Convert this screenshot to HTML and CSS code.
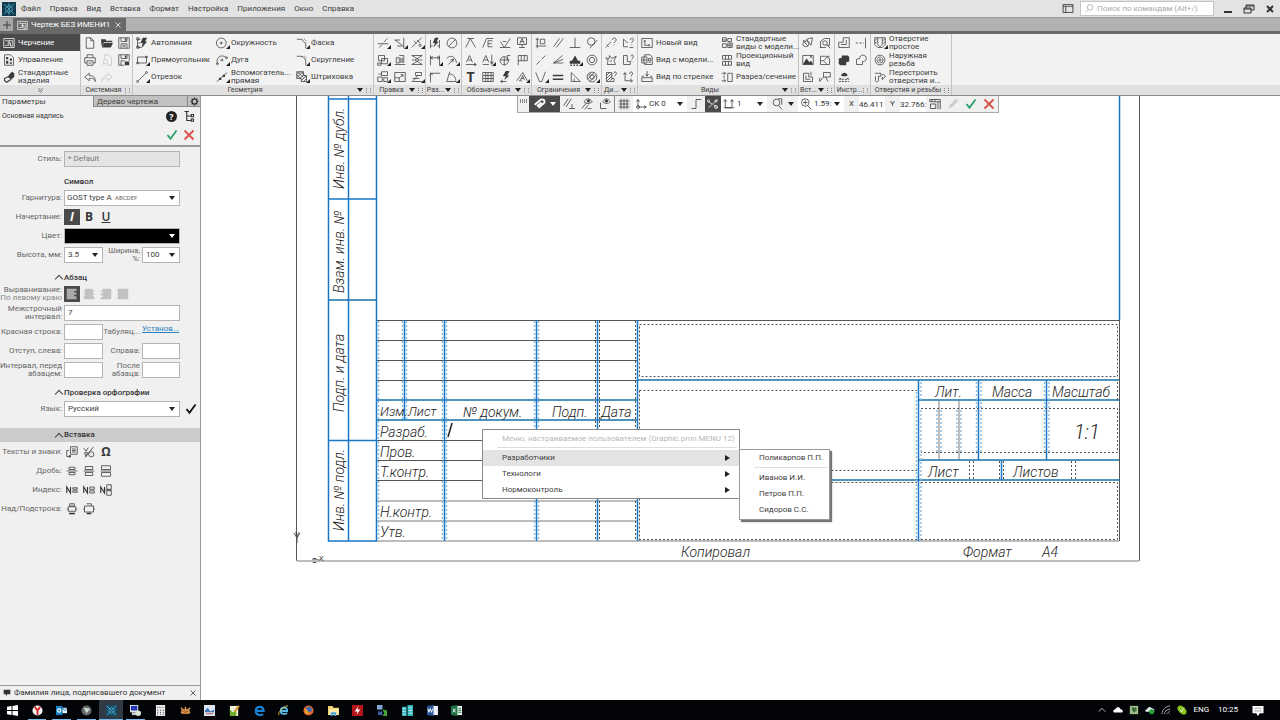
FILE: index.html
```html
<!DOCTYPE html>
<html lang="ru">
<head>
<meta charset="utf-8">
<title>Чертеж БЕЗ ИМЕНИ1</title>
<link rel="stylesheet" href="styles.css">
</head>
<body>
<svg class="sprite" aria-hidden="true">
  <symbol id="draft" viewBox="0 0 16 16"><path d="M1 2h14v12H1zM3 5h5v6H3M8 5h5v7h-3V8H6"/></symbol>
  <symbol id="manage" viewBox="0 0 16 16"><path d="M2 1h8l4 4v10H2z"/><path class="f" d="M4 4h3v3H4zM9 6h3v3H9zM4 9h3v4H4zM9 11h3v2H9z"/></symbol>
  <symbol id="bolt3d" viewBox="0 0 16 16"><path class="f" d="M8 5l4-4 3 2v5l-4 3-4-2z"/><path stroke-width="1.500" d="M8 7l-6 3v3l3 2 6-4"/></symbol>
  <symbol id="new" viewBox="0 0 16 16"><path d="M3 1h6l4 4v10H3zM9 1v4h4"/></symbol>
  <symbol id="open" viewBox="0 0 16 16"><path class="f" d="M0 3h6l1 2h8v2H4l-3 6zM4 8h12l-3 6H1z"/></symbol>
  <symbol id="save" viewBox="0 0 16 16"><path d="M1 1h14v14H1zM4 1v5h8V1M4 15V9h8v6M6 11h4M6 13h4"/><path class="f" d="M9 2h2v3H9z"/></symbol>
  <symbol id="savecfg" viewBox="0 0 16 16"><path d="M1 1h14v8M1 1v14h7M4 1v5h8V1M4 15V9h5"/><path class="f" d="M9 2h2v3H9zM9 10h6v5H9z"/></symbol>
  <symbol id="print" viewBox="0 0 16 16"><path d="M4 5V1h8v4M4 12H1V5h14v7h-3M4 9h8v6H4zM6 12h4"/></symbol>
  <symbol id="preview" viewBox="0 0 16 16"><path d="M5 1h5l4 4v10H7M5 1v6"/><circle cx="6" cy="10" r="3"/><path d="M4 12l-3 3"/></symbol>
  <symbol id="undo" viewBox="0 0 16 16"><path d="M7 3L1 8l6 5v-3c4-1 7 0 8 4 0-6-3-8-8-8z"/></symbol>
  <symbol id="redo" viewBox="0 0 16 16"><path d="M9 3l6 5-6 5v-3c-4-1-7 0-8 4 0-6 3-8 8-8z"/></symbol>
  <symbol id="autoline" viewBox="0 0 16 16"><path d="M2 3h4M2 3v11h5M3 8h3M1 1h3v3H1zM1 12h3v3H1z"/><path class="f" d="M9 1h6l-3 5h3l-8 9 2-7H6z"/></symbol>
  <symbol id="circle" viewBox="0 0 16 16"><circle cx="7" cy="8" r="6.500"/><path d="M5 8h4M7 6v4"/></symbol>
  <symbol id="rect" viewBox="0 0 16 16"><path d="M2 4h12v8H2zM1 11h2v2H1zM13 3h2v2h-2z"/></symbol>
  <symbol id="arc" viewBox="0 0 16 16"><path d="M2 13C-1 5 7-1 14 5M6 8h4M8 6v4"/><circle cx="2" cy="13" r="1.300"/><circle cx="14" cy="5" r="1.300"/></symbol>
  <symbol id="segment" viewBox="0 0 16 16"><path d="M3 13L13 3"/><circle cx="2" cy="14" r="1.300"/><circle cx="14" cy="2" r="1.300"/></symbol>
  <symbol id="aux" viewBox="0 0 16 16"><path d="M1 14L15 2"/><path class="f" d="M4 9h3v3H4zM9 5h3v3H9z"/></symbol>
  <symbol id="chamfer" viewBox="0 0 16 16"><path d="M1 3h6l6 6v6"/><path d="M8 3h5v5" stroke-dasharray="1 2"/></symbol>
  <symbol id="fillet" viewBox="0 0 16 16"><path d="M1 3h4c5 0 8 3 8 8v4"/><path d="M8 3h5v5" stroke-dasharray="1 2"/></symbol>
  <symbol id="hatch" viewBox="0 0 16 16"><path d="M1 1h9v5h4v8H7v-4H1zM1 5l4-4M1 9l8-8M5 10l5-5M7 13l6-6M10 14l4-4M2 1l8 8M1 5l6 6M7 1l7 8"/></symbol>
  <symbol id="trim" viewBox="0 0 16 16"><path d="M1 9h14M3 14l4-4M9 7l5-5"/></symbol>
  <symbol id="extend" viewBox="0 0 16 16"><path d="M1 4h7M1 4l10 7M4 12h9M13 1v14"/></symbol>
  <symbol id="split" viewBox="0 0 16 16"><path d="M1 14L14 1M4 5l3 4M8 4l4 4"/><circle cx="12" cy="11" r="1.500"/></symbol>
  <symbol id="move" viewBox="0 0 16 16"><path d="M2 2h8v7H2zM6 6h8v7H6zM1 12h4v3H1z"/></symbol>
  <symbol id="mirror" viewBox="0 0 16 16"><path d="M3 5h4v7H3zM7 2h6v10M1 14h14M9 5v7M11 5v7"/></symbol>
  <symbol id="hourglass" viewBox="0 0 16 16"><path d="M1 2h14L5 8l10 6H1l10-6zM1 8h3M12 8h3"/></symbol>
  <symbol id="copy" viewBox="0 0 16 16"><path d="M6 1h8v5H6zM1 8h6v6H1zM9 9h5v5H9zM2 4h4"/></symbol>
  <symbol id="scale" viewBox="0 0 16 16"><path d="M1 2h14v12H1zM1 9h6v5M7 9l5-4M9 5h3v3"/></symbol>
  <symbol id="rotate" viewBox="0 0 16 16"><path d="M1 14h14M2 10h9M6 2h8v4H6zM3 13l6-7"/></symbol>
  <symbol id="dimauto" viewBox="0 0 16 16"><path d="M2 4v11M14 4v11M2 12h3M11 12h3"/><path class="f" d="M8 1h5l-3 5h3l-7 8 2-6H5z"/></symbol>
  <symbol id="diam" viewBox="0 0 16 16"><circle cx="8" cy="8" r="6.500"/><path d="M3 13L13 3"/></symbol>
  <symbol id="dimlin" viewBox="0 0 16 16"><path d="M2 2v13M14 2v13M2 5h12M2 5l3-2M2 5l3 2M14 5l-3-2M14 5l-3 2"/></symbol>
  <symbol id="radius" viewBox="0 0 16 16"><path d="M1 6c5-6 12-2 13 6M3 14l7-7M10 7l-4 1M10 7l-1 4"/></symbol>
  <symbol id="dimh" viewBox="0 0 16 16"><path d="M2 15V3h13M2 3l3 2M1 6l2-3"/></symbol>
  <symbol id="angle" viewBox="0 0 16 16"><path d="M5 1L1 14h13M4 4c6 0 9 4 9 9"/></symbol>
  <symbol id="rough" viewBox="0 0 16 16"><path d="M1 14L7 2l7 12M3 2h9"/></symbol>
  <symbol id="base" viewBox="0 0 16 16"><path d="M1 14L6 2h9M8 5h6M8 5v8h6M8 9h5"/></symbol>
  <symbol id="rcheck" viewBox="0 0 16 16"><path d="M2 6l5 8 8-12M1 14h14M5 6h5"/></symbol>
  <symbol id="datum" viewBox="0 0 16 16"><path d="M2 1h12v9H2zM5 9l3-7 3 7M6 6h4M8 10v4M4 14h8"/></symbol>
  <symbol id="aline" viewBox="0 0 16 16"><path d="M2 11L6 2l4 9M4 8h5M1 14h14M12 12l3 2-3 2"/></symbol>
  <symbol id="adown" viewBox="0 0 16 16"><path d="M1 11L5 2l4 9M3 8h5M13 1v12M11 10l2 4 2-4M1 14h8"/></symbol>
  <symbol id="pos" viewBox="0 0 16 16"><circle cx="7" cy="9" r="5.500"/><path d="M7 4v11M2 8h12M11 8V2h4"/></symbol>
  <symbol id="flag" viewBox="0 0 16 16"><path d="M3 15V2h12v7H3M7 2v7M11 2v7"/></symbol>
  <symbol id="tbl" viewBox="0 0 16 16"><path d="M1 2h14v12H1zM1 6h14M1 10h14M5 2v12M8 2v12M12 2v12"/></symbol>
  <symbol id="zap" viewBox="0 0 16 16"><path class="f" d="M9 0h5l-3 6h3l-7 6 2-5H5z"/><path d="M2 14h8M2 14l3-2M2 14l3 2"/></symbol>
  <symbol id="atri" viewBox="0 0 16 16"><path d="M1 13L9 2l6 11M4 13h4M6 12l3-6 2 6M7 10h3"/></symbol>
  <symbol id="calign" viewBox="0 0 16 16"><path d="M3 1v14M1 12h14M7 3h6v6H7zM1 3h4"/></symbol>
  <symbol id="par" viewBox="0 0 16 16"><path d="M2 13L10 2M6 14l9-12"/></symbol>
  <symbol id="perp" viewBox="0 0 16 16"><path d="M1 14h14M8 1v13"/></symbol>
  <symbol id="tan" viewBox="0 0 16 16"><circle cx="7" cy="6" r="5"/><path d="M5 15L15 4"/></symbol>
  <symbol id="slash" viewBox="0 0 16 16"><path d="M2 14L7 9M9 7l5-5"/></symbol>
  <symbol id="angl" viewBox="0 0 16 16"><path d="M14 2L2 12h13M2 12l13-5"/></symbol>
  <symbol id="fix" viewBox="0 0 16 16"><path class="f" d="M8 2l4 7h3v4H1V9h3zM2 14h2v2H2zM6 14h2v2H6zM10 14h2v2h-2z"/></symbol>
  <symbol id="conc" viewBox="0 0 16 16"><circle cx="8" cy="8" r="6.500"/><circle cx="8" cy="8" r="3.500"/></symbol>
  <symbol id="sym" viewBox="0 0 16 16"><path d="M1 2l5 12M6 14h3M14 1L9 14"/></symbol>
  <symbol id="eq" viewBox="0 0 16 16"><path class="f" d="M1 5h14v2H1zM1 10h14v2H1z"/></symbol>
  <symbol id="tri" viewBox="0 0 16 16"><path d="M3 2v12h12zM7 10v4"/></symbol>
  <symbol id="hcirc" viewBox="0 0 16 16"><circle cx="8" cy="8" r="6.500"/><circle cx="8" cy="8" r="3"/><path d="M2 11l9-9M5 14l9-9M3 6l3-3"/></symbol>
  <symbol id="q1" viewBox="0 0 16 16"><path d="M1 14L8 6M2 10l3 3M10 4c0-4 5-3 5 0 0 2-3 2-3 4M12 10v1"/></symbol>
  <symbol id="q2" viewBox="0 0 16 16"><path d="M2 3v10h6M2 3l6 5M11 4c0-3 5-3 4 0 0 2-2 2-2 4M13 10v1M10 14h5"/></symbol>
  <symbol id="q3" viewBox="0 0 16 16"><path d="M1 5l4 2 1-5 3 4 6-3-3 6 2 5H3l1-5zM8 8v3M8 13v1"/></symbol>
  <symbol id="q4" viewBox="0 0 16 16"><path d="M7 2H2v12h9v-4H7zM12 3c0-3 4-2 3 1l-2 3M13 9v1"/></symbol>
  <symbol id="q5" viewBox="0 0 16 16"><path d="M2 2h7v8h3v4H2zM2 6l4-4M2 10l7-7M3 13l7-7M7 13l3-3M12 3c0-3 4-2 3 1l-2 3"/></symbol>
  <symbol id="q6" viewBox="0 0 16 16"><path d="M4 3v10h9M2 5l2-3 2 3M11 11l3 2-3 2M10 4c0-4 5-3 4 0l-2 3M12 9v1"/></symbol>
  <symbol id="vnew" viewBox="0 0 16 16"><path d="M1 2h14v12H1zM5 5v6h6M4 6l1-2 1 2M10 10l2 1-2 1"/></symbol>
  <symbol id="vmodel" viewBox="0 0 16 16"><path d="M5 4V1h7l3 3v10H5v-2M1 4h7v8H1zM10 6h3v3h-3zM10 11h3M1 8h7M4 4v8"/></symbol>
  <symbol id="varrow" viewBox="0 0 16 16"><path d="M8 0v6M6 4l2 3 2-3M1 9h14v5H1zM1 7h3M12 7h3"/></symbol>
  <symbol id="vstd" viewBox="0 0 16 16"><path d="M2 1h5v5H2zM9 2h5v4H9zM2 9h5v5H2zM9 8h6v6H9zM9 11h6M12 8v6M2 4h5"/></symbol>
  <symbol id="vproj" viewBox="0 0 16 16"><path d="M2 2h12v5H2zM2 10h12v5H2zM6 2v5M10 2v5M6 10v5M10 10v5"/></symbol>
  <symbol id="vsect" viewBox="0 0 16 16"><path d="M1 3h5M4 1l2 2-2 2M4 6v4M1 13h5M4 11l2 2-2 2M9 3h6v11H9z"/></symbol>
  <symbol id="i1" viewBox="0 0 16 16"><circle cx="5" cy="9" r="4"/><path d="M6 3l8-2-2 10zM3 7l5 5M1 4l4 3"/></symbol>
  <symbol id="i2" viewBox="0 0 16 16"><path d="M2 14V6l5-4h7v9h-4M1 14h8M11 11l4 4"/><circle cx="8" cy="8" r="3"/></symbol>
  <symbol id="pic" viewBox="0 0 16 16"><path d="M1 2h14v12H1z"/><path class="f" d="M1 14l5-8 4 5 2-2 3 5zM11 3h2v2h-2z"/></symbol>
  <symbol id="i4" viewBox="0 0 16 16"><path d="M2 3h7l5 3v8H2zM2 9h4l5 5M6 9l6-6M11 3h3"/></symbol>
  <symbol id="i5" viewBox="0 0 16 16"><path d="M2 3h7v5h5v6H2zM5 11h6M5 6v5M12 1v5"/></symbol>
  <symbol id="i6" viewBox="0 0 16 16"><path d="M6 2h9v6H6zM6 8l-5 6M9 8l3 6M1 14V9"/></symbol>
  <symbol id="t1" viewBox="0 0 16 16"><path d="M1 7h6V1h8v13H1zM4 10h7V4"/></symbol>
  <symbol id="t2" viewBox="0 0 16 16"><path d="M1 8h3M6 8h3M11 8h1M14 1v14"/></symbol>
  <symbol id="t3" viewBox="0 0 16 16"><path class="f" d="M1 6l4-1V2h8l2 2v6l-4 1v4H3l-2-2z"/></symbol>
  <symbol id="t4" viewBox="0 0 16 16"><path d="M2 14V7l4-1c0-6 9-6 9 0 0 4-4 4-5 4v4z"/></symbol>
  <symbol id="t5" viewBox="0 0 16 16"><path class="f" d="M4 6c2-5 7-5 9 0l-2 1H6z"/><path d="M1 14h14M2 9l4 3M14 9l-4 3M1 11h14" stroke-dasharray="3 1"/></symbol>
  <symbol id="hole" viewBox="0 0 16 16"><path d="M1 1h14v9l-4 4H5l-4-4zM5 1v9l3 3 3-3V1M1 5l3-3M1 9l3-3M12 5l3-3M12 9l3-3"/></symbol>
  <symbol id="thread" viewBox="0 0 16 16"><circle cx="8" cy="8" r="6.500"/><circle cx="8" cy="8" r="4" stroke-dasharray="6 1"/><circle cx="8" cy="8" r="1.500"/></symbol>
  <symbol id="rebuild" viewBox="0 0 16 16"><path d="M1 3h8v4H6v6l-2 2-2-2V7M10 5c6-2 6 5 1 5M12 8l-2 2 2 2"/></symbol>
  <symbol id="gear" viewBox="0 0 16 16"><circle cx="8" cy="8" r="4.500" stroke-width="2"/><path stroke-width="2" d="M8 1v2M8 13v2M1 8h2M13 8h2M3 3l1.500 1.500M11.500 11.500L13 13M3 13l1.500-1.500M11.500 4.500L13 3"/></symbol>
  <symbol id="tree" viewBox="0 0 16 16"><path stroke-width="1.500" d="M2 2h6M5 2v12h6M5 8h6M11 6h3v3h-3zM11 12h3v3h-3z"/></symbol>
  <symbol id="tick" viewBox="0 0 16 16"><path stroke-width="2.500" d="M2 8l4 5 8-11"/></symbol>
  <symbol id="cross" viewBox="0 0 16 16"><path stroke-width="2.500" d="M2 2l12 12M14 2L2 14"/></symbol>
  <symbol id="al1" viewBox="0 0 16 16"><path class="f" d="M1 1h13v3h-3v2h3v3h-3v2h3v4H1z"/></symbol>
  <symbol id="al2" viewBox="0 0 16 16"><path class="f" d="M3 1h10v2h2v2h-2v2h2v2h-2v2h2v4H1v-4h2V9H1V7h2V5H1V3h2z"/></symbol>
  <symbol id="al3" viewBox="0 0 16 16"><path class="f" d="M4 1h11v14H1v-3h3v-2H1V7h3V5H1V3h3z"/></symbol>
  <symbol id="al4" viewBox="0 0 16 16"><path class="f" d="M1 1h14v14H1z"/></symbol>
  <symbol id="ins" viewBox="0 0 16 16"><path d="M6 1h9v10H6zM8 4h5M8 6h5M8 8h5M4 6H1v8h5v-2M4 12l2 2-2 2"/></symbol>
  <symbol id="frac" viewBox="0 0 16 16"><path d="M1 3l3 4 3-5M3 15L14 1M2 9h4M2 9l2 5 2-5"/><circle cx="11" cy="11" r="3.500"/></symbol>
  <symbol id="d1" viewBox="0 0 16 16"><path d="M1 8h14M4 3h8v3H4zM4 10h8v3H4z"/></symbol>
  <symbol id="d2" viewBox="0 0 16 16"><path d="M1 8h14M3 2h10v4H3zM3 10h10v4H3z"/></symbol>
  <symbol id="d3" viewBox="0 0 16 16"><path d="M1 8h14M2 1h12v5H2zM2 10h12v5H2z"/></symbol>
  <symbol id="n1" viewBox="0 0 16 16"><path stroke-width="1.500" d="M1 12V4l5 8V4"/><path d="M9 5h6v2H9zM9 9h6v2H9z"/></symbol>
  <symbol id="n2" viewBox="0 0 16 16"><path stroke-width="1.500" d="M1 12V4l5 8V4"/><path d="M9 4h6v3H9zM9 9h6v3H9z"/></symbol>
  <symbol id="n3" viewBox="0 0 16 16"><path stroke-width="1.500" d="M1 12V4l5 8V4"/><path d="M9 1h6v6H9zM9 9h6v6H9zM7 8h9"/></symbol>
  <symbol id="o1" viewBox="0 0 16 16"><path d="M3 5h10v6H3zM1 8h2M13 8h2M5 1h6v3H5z"/><path class="f" d="M4 13h8v2H4z"/></symbol>
  <symbol id="o2" viewBox="0 0 16 16"><path d="M2 4h12v8H2zM0 8h2M14 8h2M5 1h6v3"/><path class="f" d="M5 13h6v2H5z"/></symbol>
  <symbol id="clip" viewBox="0 0 16 16"><path stroke-width="2.500" d="M1 9l7-6c4-3 8 1 5 4l-7 6M4 11l6-5"/></symbol>
  <symbol id="snap1" viewBox="0 0 16 16"><path d="M1 10L7 1M4 12L11 1M8 14h8M12 8v6"/></symbol>
  <symbol id="snap2" viewBox="0 0 16 16"><path d="M4 5c3-5 8-5 11 0-3 3-8 3-11 0M1 14l6-7M5 15l5-6M9 14h5"/><circle class="f" cx="10" cy="4" r="2"/></symbol>
  <symbol id="snap3" viewBox="0 0 16 16"><path d="M5 5c3-5 7-5 10 0-3 3-7 3-10 0M2 6v8h8"/><circle class="f" cx="10" cy="4" r="2"/></symbol>
  <symbol id="grid" viewBox="0 0 16 16"><path d="M4 1v14M8 1v14M12 1v14M1 4h14M1 8h14M1 12h14"/></symbol>
  <symbol id="axes" viewBox="0 0 16 16"><path d="M4 2v10h11M2 5l2-3 2 3M12 10l3 2-3 2"/><circle cx="4" cy="12" r="2"/></symbol>
  <symbol id="step" viewBox="0 0 16 16"><path d="M2 14h6V2h7"/></symbol>
  <symbol id="cut" viewBox="0 0 16 16"><path d="M2 5l5 3M14 2L2 13M9 9l5 4"/><circle cx="2" cy="4" r="1.500"/><circle cx="12" cy="12" r="2"/><circle cx="12" cy="4" r="1.500"/></symbol>
  <symbol id="stepxy" viewBox="0 0 16 16"><path d="M3 3v10h9V3M1 5l2-3 2 3M10 5l2-3 2 3M1 13h14"/></symbol>
  <symbol id="zoomfit" viewBox="0 0 16 16"><circle cx="6" cy="6" r="4.500"/><path d="M9 10l4 5M8 1h5v8"/></symbol>
  <symbol id="zoomin" viewBox="0 0 16 16"><circle cx="7" cy="6" r="5"/><path d="M4 6h6M7 3v6M10 10l5 5"/></symbol>
  <symbol id="ruler" viewBox="0 0 16 16"><path d="M1 2h14v3H1zM12 5v10M15 5v10M2 8h7v6H2zM4 2v3M8 2v3"/></symbol>
  <symbol id="pencil" viewBox="0 0 16 16"><path class="f" d="M2 14l2-5 8-8 3 3-8 8z"/></symbol>
  <symbol id="magn" viewBox="0 0 16 16"><circle cx="9" cy="6" r="5"/><path d="M5 10l-4 5"/></symbol>
  <symbol id="close" viewBox="0 0 16 16"><path stroke-width="1.500" d="M3 3l10 10M13 3L3 13"/></symbol>
  <symbol id="chev" viewBox="0 0 16 16"><path stroke-width="1.500" d="M3 3l5 4 5-4M3 8l5 4 5-4"/></symbol>
</svg>

<header class="menubar">
  <svg class="logo" viewBox="0 0 16 16" aria-hidden="true"><path fill="#12394d" d="M0 0h16v16H0z"/><g fill="none" stroke="#4ea6c4"><circle cx="8" cy="8" r="4"/><path d="M2 2l12 12M14 2L2 14M8 1v14"/></g></svg>
  <nav class="menus" aria-label="Главное меню">
    <button>Файл</button><button>Правка</button><button>Вид</button><button>Вставка</button><button>Формат</button><button>Настройка</button><button>Приложения</button><button>Окно</button><button>Справка</button>
  </nav>
  <button class="layout" aria-label="Экран"><svg viewBox="0 0 12 10"><path d="M.5.500h11v9H.5zM.5 2.500h11M3.500 2.500v7"/></svg></button>
  <label class="search"><svg><use href="#magn"/></svg><input type="search" placeholder="Поиск по командам (Alt+/)" aria-label="Поиск по командам"></label>
  <div class="winbtns">
    <button aria-label="Свернуть"><svg viewBox="0 0 12 12"><path stroke-width="2" d="M2 9h8"/></svg></button>
    <button aria-label="Восстановить"><svg viewBox="0 0 12 12"><path d="M1 5h7v5H1zM3 5V2h8v5H8M3 3h8M1 6h7"/></svg></button>
    <button aria-label="Закрыть"><svg viewBox="0 0 12 12"><path stroke-width="2" d="M3 3l6 6M9 3L3 9"/></svg></button>
  </div>
</header>

<div class="tabbar">
  <button class="addtab" aria-label="Новая вкладка"><svg viewBox="0 0 12 12"><path d="M6 2v8M2 6h8"/></svg></button>
  <div class="doctab"><svg><use href="#draft"/></svg><span>Чертеж БЕЗ ИМЕНИ1</span><button aria-label="Закрыть вкладку"><svg><use href="#close"/></svg></button></div>
</div>

<section class="ribbon" aria-label="Лента">
  <div class="group sets">
    <div class="cells">
      <button class="cmd on"><svg><use href="#draft"/></svg><span>Черчение</span></button>
      <button class="cmd"><svg><use href="#manage"/></svg><span>Управление</span></button>
      <button class="cmd"><svg><use href="#bolt3d"/></svg><span>Стандартные<br>изделия</span></button>
    </div>
    <div class="foot"><svg><use href="#chev"/></svg></div>
  </div>
  <div class="group">
    <div class="cells c3">
      <button aria-label="Создать"><svg><use href="#new"/></svg></button><button aria-label="Открыть"><svg><use href="#open"/></svg></button><button aria-label="Сохранить"><svg><use href="#save"/></svg></button>
      <button aria-label="Печать"><svg><use href="#print"/></svg></button><button disabled aria-label="Просмотр"><svg><use href="#preview"/></svg></button><button aria-label="Сохранить как"><svg><use href="#savecfg"/></svg></button>
      <button aria-label="Отменить"><svg><use href="#undo"/></svg></button><button disabled aria-label="Повторить"><svg><use href="#redo"/></svg></button>
    </div>
    <div class="foot grip"><span>Системная</span></div>
  </div>
  <div class="group">
    <div class="cells w3">
      <button class="cmd"><svg><use href="#autoline"/></svg><span>Автолиния</span></button><button class="cmd more"><svg><use href="#circle"/></svg><span>Окружность</span></button><button class="cmd more"><svg><use href="#chamfer"/></svg><span>Фаска</span></button>
      <button class="cmd more"><svg><use href="#rect"/></svg><span>Прямоугольник</span></button><button class="cmd more"><svg><use href="#arc"/></svg><span>Дуга</span></button><button class="cmd more"><svg><use href="#fillet"/></svg><span>Скругление</span></button>
      <button class="cmd more"><svg><use href="#segment"/></svg><span>Отрезок</span></button><button class="cmd more"><svg><use href="#aux"/></svg><span>Вспомогатель...<br>прямая</span></button><button class="cmd more"><svg><use href="#hatch"/></svg><span>Штриховка</span></button>
    </div>
    <div class="foot grip drop"><span>Геометрия</span></div>
  </div>
  <div class="group">
    <div class="cells c3">
      <button class="more" aria-label="Усечь"><svg><use href="#trim"/></svg></button><button class="more" aria-label="Удлинить"><svg><use href="#extend"/></svg></button><button class="more" aria-label="Разбить"><svg><use href="#split"/></svg></button>
      <button class="more" aria-label="Переместить"><svg><use href="#move"/></svg></button><button aria-label="Зеркально"><svg><use href="#mirror"/></svg></button><button aria-label="Деформация"><svg><use href="#hourglass"/></svg></button>
      <button class="more" aria-label="Копия"><svg><use href="#copy"/></svg></button><button aria-label="Масштаб"><svg><use href="#scale"/></svg></button><button class="more" aria-label="Повернуть"><svg><use href="#rotate"/></svg></button>
    </div>
    <div class="foot grip drop"><span>Правка</span></div>
  </div>
  <div class="group">
    <div class="cells c2">
      <button aria-label="Авторазмер"><svg><use href="#dimauto"/></svg></button><button aria-label="Диаметр"><svg><use href="#diam"/></svg></button>
      <button class="more" aria-label="Линейный"><svg><use href="#dimlin"/></svg></button><button class="more" aria-label="Радиальный"><svg><use href="#radius"/></svg></button>
      <button aria-label="Высота"><svg><use href="#dimh"/></svg></button><button class="more" aria-label="Угловой"><svg><use href="#angle"/></svg></button>
    </div>
    <div class="foot grip drop"><span>Раз...</span></div>
  </div>
  <div class="group">
    <div class="cells c4">
      <button aria-label="Клеймение"><svg><use href="#rough"/></svg></button><button aria-label="База"><svg><use href="#base"/></svg></button><button aria-label="Шероховатость"><svg><use href="#rcheck"/></svg></button><button aria-label="Обозначение базы"><svg><use href="#datum"/></svg></button>
      <button aria-label="Линия разреза"><svg><use href="#aline"/></svg></button><button class="more" aria-label="Стрелка взгляда"><svg><use href="#adown"/></svg></button><button aria-label="Позиция"><svg><use href="#pos"/></svg></button><button aria-label="Допуск"><svg><use href="#flag"/></svg></button>
      <button class="letter" aria-label="Текст">T</button><button aria-label="Таблица"><svg><use href="#tbl"/></svg></button><button aria-label="Автоось"><svg><use href="#zap"/></svg></button><button class="more" aria-label="Знак"><svg><use href="#atri"/></svg></button>
    </div>
    <div class="foot grip drop"><span>Обозначения</span></div>
  </div>
  <div class="group">
    <div class="cells c4">
      <button aria-label="Выровнять"><svg><use href="#calign"/></svg></button><button aria-label="Параллельность"><svg><use href="#par"/></svg></button><button aria-label="Перпендикулярность"><svg><use href="#perp"/></svg></button><button aria-label="Касание"><svg><use href="#tan"/></svg></button>
      <button aria-label="Коллинеарность"><svg><use href="#slash"/></svg></button><button aria-label="Угол"><svg><use href="#angl"/></svg></button><button class="more" aria-label="Фиксация"><svg><use href="#fix"/></svg></button><button aria-label="Концентричность"><svg><use href="#conc"/></svg></button>
      <button class="more" aria-label="Симметрия"><svg><use href="#sym"/></svg></button><button aria-label="Равенство"><svg><use href="#eq"/></svg></button><button aria-label="Фиксировать угол"><svg><use href="#tri"/></svg></button><button class="more" aria-label="Показать"><svg><use href="#hcirc"/></svg></button>
    </div>
    <div class="foot grip drop"><span>Ограничения</span></div>
  </div>
  <div class="group">
    <div class="cells c2">
      <button aria-label="Расстояние"><svg><use href="#q1"/></svg></button><button aria-label="Угол между"><svg><use href="#q2"/></svg></button>
      <button aria-label="Точка"><svg><use href="#q3"/></svg></button><button aria-label="Длина"><svg><use href="#q4"/></svg></button>
      <button aria-label="Площадь"><svg><use href="#q5"/></svg></button><button aria-label="Координаты"><svg><use href="#q6"/></svg></button>
    </div>
    <div class="foot grip drop"><span>Ди...</span></div>
  </div>
  <div class="group">
    <div class="cells w2">
      <button class="cmd"><svg><use href="#vnew"/></svg><span>Новый вид</span></button><button class="cmd"><svg><use href="#vstd"/></svg><span>Стандартные<br>виды с модели...</span></button>
      <button class="cmd"><svg><use href="#vmodel"/></svg><span>Вид с модели...</span></button><button class="cmd"><svg><use href="#vproj"/></svg><span>Проекционный<br>вид</span></button>
      <button class="cmd"><svg><use href="#varrow"/></svg><span>Вид по стрелке</span></button><button class="cmd"><svg><use href="#vsect"/></svg><span>Разрез/сечение</span></button>
    </div>
    <div class="foot grip drop"><span>Виды</span></div>
  </div>
  <div class="group">
    <div class="cells c2">
      <button aria-label="Фрагмент"><svg><use href="#i1"/></svg></button><button aria-label="Выносной"><svg><use href="#i2"/></svg></button>
      <button aria-label="Рисунок"><svg><use href="#pic"/></svg></button><button aria-label="Местный вид"><svg><use href="#i4"/></svg></button>
      <button aria-label="Вид"><svg><use href="#i5"/></svg></button><button aria-label="Выноска"><svg><use href="#i6"/></svg></button>
    </div>
    <div class="foot grip drop"><span>Вст...</span></div>
  </div>
  <div class="group">
    <div class="cells c2">
      <button aria-label="Эквидистанта"><svg><use href="#t1"/></svg></button><button aria-label="Разрыв"><svg><use href="#t2"/></svg></button>
      <button aria-label="Область"><svg><use href="#t3"/></svg></button><button aria-label="Контур"><svg><use href="#t4"/></svg></button>
      <button aria-label="Проверка"><svg><use href="#t5"/></svg></button>
    </div>
    <div class="foot grip"><span>Инстр...</span></div>
  </div>
  <div class="group">
    <div class="cells w1">
      <button class="cmd more"><svg><use href="#hole"/></svg><span>Отверстие<br>простое</span></button>
      <button class="cmd"><svg><use href="#thread"/></svg><span>Наружная<br>резьба</span></button>
      <button class="cmd"><svg><use href="#rebuild"/></svg><span>Перестроить<br>отверстия и...</span></button>
    </div>
    <div class="foot grip"><span>Отверстия и резьбы</span></div>
  </div>
  <div class="group rest"><div class="cells"></div><div class="foot"></div></div>
</section>

<main class="work">
  <aside class="panel">
    <div class="ptabs"><button class="cur">Параметры</button><button>Дерево чертежа</button><button class="pgear" aria-label="Настройка панели"><svg><use href="#gear"/></svg></button></div>
    <div class="phead">
      <span>Основная надпись</span>
      <button class="help" aria-label="Справка">?</button>
      <button aria-label="Дерево"><svg><use href="#tree"/></svg></button>
      <button class="ok" aria-label="Применить"><svg><use href="#tick"/></svg></button>
      <button class="no" aria-label="Отмена"><svg><use href="#cross"/></svg></button>
    </div>
    <form class="form">
      <div class="row"><label for="style">Стиль:</label><input id="style" value="* Default" disabled></div>
      <h2>Символ</h2>
      <div class="row"><label for="face">Гарнитура:</label><span class="sel face"><select id="face"><option>GOST type A</option></select><small>ABCDEF</small></span></div>
      <div class="row"><span class="lbl">Начертание:</span><div class="marks"><button type="button" class="on it">I</button><button type="button" class="bo">B</button><button type="button" class="un">U</button></div></div>
      <div class="row"><label for="color">Цвет:</label><span class="sel black"><select id="color"><option></option></select></span></div>
      <div class="row pair"><label for="h">Высота, мм:</label><span class="sel"><select id="h"><option>3.5</option></select></span><label for="w">Ширина,<br>%:</label><span class="sel"><select id="w"><option>100</option></select></span></div>
      <h2 class="fold">Абзац</h2>
      <div class="row"><span class="lbl">Выравнивание:<br><i>По левому краю</i></span><div class="marks align"><button type="button" class="on" aria-label="По левому краю"><svg><use href="#al1"/></svg></button><button type="button" aria-label="По центру"><svg><use href="#al2"/></svg></button><button type="button" aria-label="По правому краю"><svg><use href="#al3"/></svg></button><button type="button" aria-label="По ширине"><svg><use href="#al4"/></svg></button></div></div>
      <div class="row"><label for="ls">Межстрочный<br>интервал:</label><input id="ls" value="7"></div>
      <div class="row pair"><label for="red">Красная строка:</label><input id="red"><span class="lbl">Табуляц...</span><a href="#">Установ...</a></div>
      <div class="row pair"><label for="il">Отступ, слева:</label><input id="il"><label for="ir">Справа:</label><input id="ir"></div>
      <div class="row pair"><label for="before">Интервал, перед<br>абзацем:</label><input id="before"><label for="after">После<br>абзаца:</label><input id="after"></div>
      <h2 class="fold">Проверка орфографии</h2>
      <div class="row lang"><label for="lang">Язык:</label><span class="sel"><select id="lang"><option>Русский</option></select></span><button type="button" aria-label="Проверить"><svg><use href="#tick"/></svg></button></div>
      <h2 class="fold band">Вставка</h2>
      <div class="row"><span class="lbl">Тексты и знаки:</span><div class="marks"><button type="button" aria-label="Текст"><svg><use href="#ins"/></svg></button><button type="button" aria-label="Знак"><svg><use href="#frac"/></svg></button><button type="button" class="bo">Ω</button></div></div>
      <div class="row"><span class="lbl">Дробь:</span><div class="marks"><button type="button" aria-label="Малая"><svg><use href="#d1"/></svg></button><button type="button" aria-label="Средняя"><svg><use href="#d2"/></svg></button><button type="button" aria-label="Большая"><svg><use href="#d3"/></svg></button></div></div>
      <div class="row"><span class="lbl">Индекс:</span><div class="marks"><button type="button" aria-label="Малый"><svg><use href="#n1"/></svg></button><button type="button" aria-label="Средний"><svg><use href="#n2"/></svg></button><button type="button" aria-label="Большой"><svg><use href="#n3"/></svg></button></div></div>
      <div class="row"><span class="lbl">Над/Подстрока:</span><div class="marks"><button type="button" aria-label="Узкая"><svg><use href="#o1"/></svg></button><button type="button" aria-label="Широкая"><svg><use href="#o2"/></svg></button></div></div>
    </form>
    <div class="hint"><svg viewBox="0 0 12 12"><path class="f" d="M1 1h10v7H6v3L4 8H1z"/></svg><span>Фамилия лица, подписавшего документ</span><button aria-label="Закрыть подсказку"><svg><use href="#close"/></svg></button></div>
  </aside>

  <div class="canvas">
    <svg class="sheet" viewBox="200 96 1080 604" preserveAspectRatio="xMinYMin meet" role="img" aria-label="Чертеж с основной надписью">
      <g class="thin">
        <path d="M296.500 96V560.500H1139.500V96M1119.500 320V541M377 320.500H1119M377 340.500H637M377 360.500H637M377 380.500H637M377 440.500H637M377 460.500H637M377 480.500H637"/>
        <path d="M294 533l3 5 3-5M297 538v5M313 560h8M313 558.500h3v4h-3z"/>
      </g>
      <path class="pale" d="M377 501H637M377 521H637M377 541H1119M939 400V460M959 400V460M297 561H1139"/>
      <path class="steel" d="M328 300H377M377 400H637M377 420H637M637 380H1119M918 400H1119M918 460H1119M637 480H1119"/>
      <path class="blue" d="M328.500 96V541H377M348.500 96V541M376.500 96V541M328 99H377M328 199H377M328 440.500H377M1119.500 96V320M404.500 320V420M444.500 320V541M536.500 320V541M597.500 320V541M637.500 320V541M918.500 380V541M978.500 380V460M1046.500 380V460M1001.500 460V480"/>
      <path class="dotb" d="M378.500 321V541M402.500 321V420M406.500 321V420M442.500 321V541M446.500 321V541M534.500 321V541M538.500 321V541M916.500 392V541M921 382V400M921 410V541M976.500 382V453M981 382V453M1044.500 382V453M1049 382V453M937 410V453M941 410V453M957 410V453M961 410V453"/>
      <path class="dot" d="M595.500 321V541M599.500 321V541M635.500 321V541M639.500 324.500H1117.500V376.500H639.500zM639.500 390.500H917M639.500 470.500H917M639.500 390.500V541M639.500 482.500H917M639 539.500H917M921 482.500H1117.500V539.500H921M921 408.500H1117.500V452.500H921M1117.500 382V400M969.500 461V480M973.500 461V480M999.500 461V480M1003.500 461V480M1071.500 461V480M1075.500 461V480"/>
      <g class="gost">
        <g class="small"><text x="380" y="416">Изм.</text><text x="408" y="416">Лист</text></g>
        <text x="463" y="417">№ докум.</text><text x="552" y="417">Подп.</text><text x="601" y="417">Дата</text>
        <text x="380" y="437">Разраб.</text><text x="380" y="457">Пров.</text><text x="380" y="477">Т.контр.</text><text x="380" y="517">Н.контр.</text><text x="380" y="537">Утв.</text>
        <text x="935" y="397">Лит.</text><text x="992" y="397">Масса</text><text x="1052" y="397">Масштаб</text>
        <text x="928" y="477">Лист</text><text x="1013" y="477">Листов</text>
        <text x="681" y="557">Копировал</text><text x="963" y="557">Формат</text><text x="1042" y="557">А4</text>
        <text class="big" x="1074" y="439">1:1</text>
        <text transform="translate(344 189) rotate(-90)">Инв. № дубл.</text>
        <text transform="translate(344 293) rotate(-90)">Взам. инв. №</text>
        <text transform="translate(344 412) rotate(-90)">Подп. и дата</text>
        <text transform="translate(344 531) rotate(-90)">Инв. № подл.</text>
      </g>
      <path class="caret" d="M448 437l4-14"/>
      <g class="axis"><text x="295" y="537">Y</text><text x="319" y="561">X</text></g>
    </svg>

    <div class="quick" role="toolbar" aria-label="Быстрый доступ">
      <span class="handle"></span>
      <button class="dark wide" aria-label="Привязки"><svg><use href="#clip"/></svg><b class="caretdn"></b></button>
      <button aria-label="Перпендикуляр"><svg><use href="#snap1"/></svg></button><button aria-label="Показать ограничения"><svg><use href="#snap2"/></svg></button><button class="edge" aria-label="Показать системы"><svg><use href="#snap3"/></svg></button>
      <button aria-label="Сетка"><svg><use href="#grid"/></svg></button>
      <span class="val cs"><svg><use href="#axes"/></svg>СК 0<b class="caretdn"></b></span>
      <button aria-label="Орто"><svg><use href="#step"/></svg></button><button class="dark" aria-label="Округление"><svg><use href="#cut"/></svg></button>
      <span class="val stp"><svg><use href="#stepxy"/></svg>1<b class="caretdn"></b></span>
      <button class="wide" aria-label="Показать все"><svg><use href="#zoomfit"/></svg><b class="caretdn"></b></button>
      <span class="val zm"><svg><use href="#zoomin"/></svg>1.59:<b class="caretdn"></b></span>
      <label for="cx">X</label><input id="cx" value="46.411"><label for="cy">Y</label><input id="cy" value="32.766:">
      <button aria-label="Измерить"><svg><use href="#ruler"/></svg></button><button disabled aria-label="Карандаш"><svg><use href="#pencil"/></svg></button><button class="ok" aria-label="Создать объект"><svg><use href="#tick"/></svg></button><button class="no" aria-label="Прервать"><svg><use href="#cross"/></svg></button>
    </div>

    <div class="menu main" role="menu">
      <p>Меню, настраиваемое пользователем (Graphic.pmn MENU 12)</p><hr>
      <button class="sub hot" role="menuitem">Разработчики</button><button class="sub" role="menuitem">Технологи</button><button class="sub" role="menuitem">Нормоконтроль</button>
    </div>
    <div class="menu people" role="menu">
      <button role="menuitem">Поликарпов П.П.</button><hr><button role="menuitem">Иванов И.И.</button><button role="menuitem">Петров П.П.</button><button role="menuitem">Сидоров С.С.</button>
    </div>
  </div>
</main>

<footer class="taskbar">
  <div class="apps">
    <button aria-label="Пуск"><svg viewBox="0 0 12 12"><path fill="#fff" d="M0 2l5-1v4.500H0zM6 1l6-1v5.500H6zM0 6.500h5V11l-5-1zM6 6.500h6V12l-6-1z"/></svg></button>
    <button class="run" aria-label="Яндекс"><svg viewBox="0 0 12 12"><circle cx="6" cy="6" r="5.500" fill="#f4f4f4"/><path stroke="#d22" stroke-width="2" fill="none" d="M3 2l3 4 3-4M6 6v5"/></svg></button>
    <button class="run" aria-label="Outlook"><svg viewBox="0 0 12 12"><path fill="#1583c9" d="M0 1h7v10H0z"/><path fill="#dcecf8" d="M7 3h5v6H7z"/><circle cx="3.500" cy="6" r="1.800" fill="none" stroke="#fff" stroke-width="1.200"/><path d="M7 3l2.500 3L12 3" fill="none" stroke="#1583c9"/></svg></button>
    <button class="run" aria-label="Плеер"><svg viewBox="0 0 12 12"><circle cx="6" cy="6" r="5.500" fill="#666d69"/><path fill="#cfe0d4" d="M3 3l7 1-4 5z"/></svg></button>
    <button class="run act" aria-label="КОМПАС"><svg viewBox="0 0 12 12"><path fill="#164c66" d="M0 0h12v12H0z"/><g fill="none" stroke="#4ea6c4"><circle cx="6" cy="6" r="3"/><path d="M1 1l10 10M11 1L1 11"/></g></svg></button>
    <button class="run" aria-label="Компьютер"><svg viewBox="0 0 12 12"><path fill="#dfe6ee" d="M0 0h9v8H0z"/><path fill="#2436b4" d="M1 1h7v5H1z"/><path fill="#c8cfc8" d="M2 8h6v3H2z"/><circle cx="9" cy="9" r="3" fill="#d9e6d0"/></svg></button>
    <button aria-label="Калькулятор"><svg viewBox="0 0 12 12"><path fill="#eee" d="M1 0h10v12H1z"/><path stroke="#555" fill="none" d="M2 2.500h8M3 5v6M6 5v6M9 5v6" stroke-dasharray="1.500 1"/></svg></button>
    <button aria-label="Редактор"><svg viewBox="0 0 12 12"><ellipse cx="6" cy="7" rx="5" ry="3" fill="#b8742f"/><path stroke="#d9a25c" stroke-width="1.500" d="M1 3l3 3M11 3L8 6M6 2v4M1 8l3 1M11 8L8 9"/></svg></button>
    <button aria-label="Снимки"><svg viewBox="0 0 12 12"><path fill="#dde7f2" d="M0 0h12v12H0z"/><path fill="#3f78b8" d="M1 6l3-3 3 4 4-2v3H1z"/><path fill="#c44" d="M2 9h8v1H2z"/></svg></button>
    <button aria-label="Блокнот"><svg viewBox="0 0 12 12"><path fill="#eef3dc" d="M1 1h9v11H1z"/><path fill="#6fae2c" d="M1 5l3 3 4-2v6H1z"/><path stroke="#e1902d" stroke-width="2" d="M11 1L6 7"/></svg></button>
    <button aria-label="Edge"><svg viewBox="0 0 12 12"><path fill="none" stroke="#1b7fd1" stroke-width="2.400" d="M2 6.500h8.500C10 0 2 1 2 6.500c0 5 5 5 8 3.500"/></svg></button>
    <button aria-label="Internet Explorer"><svg viewBox="0 0 12 12"><path fill="none" stroke="#54b7e8" stroke-width="2" d="M3 6.500h7C10 1 3 2 3 6.500c0 4 5 4 7 2"/><path fill="none" stroke="#e5c33c" d="M1 11C-1 8 8 0 11 1"/></svg></button>
    <button aria-label="Firefox"><svg viewBox="0 0 12 12"><circle cx="6" cy="6" r="5.500" fill="#e4682a"/><circle cx="6.500" cy="5" r="3.200" fill="#3d6cae"/><path fill="#f39a2c" d="M1 3l4 3 2 3-4 1z"/></svg></button>
    <button aria-label="Проводник"><svg viewBox="0 0 12 12"><path fill="#f2cf6c" d="M0 1h5l1 2h6v8H0z"/><path fill="#fbeaa9" d="M1 4h10v7H1z"/><path fill="#47a5dc" d="M3 8h6v4H7v-2H5v2H3z"/></svg></button>
    <button aria-label="Flash"><svg viewBox="0 0 12 12"><path fill="#b3151b" d="M0 0h12v12H0z"/><path fill="#fff" d="M7 1L3 7h3l-1 4 4-6H6z"/></svg></button>
    <button aria-label="Удаленный доступ"><svg viewBox="0 0 12 12"><path fill="#7fa6d6" d="M0 0h6v5H0z"/><path fill="#3e5fa0" d="M1 7h5v4H1z"/><path fill="#49a838" d="M6 5l5 1v6H6l2-3z"/></svg></button>
    <button aria-label="Серверы"><svg viewBox="0 0 12 12"><path fill="#35b7be" d="M0 2h5v10H0zM6 0h6v12H6z"/><path stroke="#d9f6f7" d="M1 4h3M1 7h3M1 10h3M7 3h4M7 6h4M7 9h4"/></svg></button>
    <button aria-label="Word"><svg viewBox="0 0 12 12"><path fill="#e8eef8" d="M6 1h6v10H6z"/><path fill="#2a5699" d="M0 1l7-1v12l-7-1z"/><path fill="none" stroke="#fff" d="M1 4l1 4 1.500-4L5 8l1-4"/></svg></button>
    <button aria-label="Excel"><svg viewBox="0 0 12 12"><path fill="#e4f2e8" d="M6 1h6v10H6z"/><path fill="#1f7244" d="M0 1l7-1v12l-7-1z"/><path fill="none" stroke="#fff" d="M2 4l3 4M5 4L2 8"/><path stroke="#1f7244" d="M8 4h3M8 6h3M8 8h3"/></svg></button>
  </div>
  <div class="tray">
    <svg viewBox="0 0 12 12"><path fill="none" stroke="#ddd" d="M2 8l4-4 4 4"/></svg>
    <svg viewBox="0 0 12 12"><path fill="#fff" d="M1 9c-2-3 1-4 2-4 1-3 5-3 6 0 3 0 4 4 1 4z"/></svg>
    <svg viewBox="0 0 12 12"><path fill="#9cbf87" d="M1 1h10v10H1z"/><path fill="#426b3e" d="M3 3h6v4L6 9 4 7z"/></svg>
    <svg viewBox="0 0 12 12"><path fill="#dfe9e2" d="M0 7l5-5 6 3v3H1z"/><circle cx="8" cy="8" r="3" fill="#1fa038"/></svg>
    <svg viewBox="0 0 12 12"><path fill="none" stroke="#bbb" d="M1 11C2 5 5 2 11 1M4 11c0-3 3-6 7-6M7 11c0-1 2-3 4-3M10 11h1"/></svg>
    <svg viewBox="0 0 12 12"><circle cx="4" cy="4" r="3.500" fill="#8cc21f"/><circle cx="8" cy="8" r="3.500" fill="#8cc21f"/><circle cx="6" cy="6" r="4" fill="#8cc21f"/><path fill="none" stroke="#fff" d="M4 6l1.500 2L8 4"/></svg>
    <span>ENG</span><time>10:25</time>
    <svg class="note" viewBox="0 0 12 12"><path fill="#fff" d="M0 1h12v8H8l-2 3-2-3H0z"/><path stroke="#999" d="M2 3.500h8M2 6.500h8"/></svg>
  </div>
</footer>
</body>
</html>
```

FILE: styles.css
```css
* { box-sizing: border-box; }
html, body { height: 100%; margin: 0; }
body {
  display: flex;
  flex-direction: column;
  overflow: hidden;
  font: 8px/10px "Roboto", "Noto Sans", sans-serif;
  color: #3c3c3c;
  background: #f0f0f0;
}
button, input, select { font: inherit; color: inherit; margin: 0; padding: 0; border: 0; background: none; border-radius: 0; }
button { display: flex; align-items: center; justify-content: center; }
svg { display: block; flex: none; width: 12px; height: 12px; fill: none; stroke: currentColor; }
.f { fill: currentColor; stroke: none; }
.sprite { position: absolute; width: 0; height: 0; }
.menubar svg path[fill], .taskbar svg { stroke: none; }

/* menu line */
.menubar { display: flex; align-items: center; flex: none; height: 17px; padding-right: 3px; background: #e3e3e3; }
.logo { width: 14px; height: 14px; margin: 0 5px 0 2px; }
.menus { display: flex; gap: 9px; flex: 1; }
.layout svg { width: 12px; height: 9px; }
.search { display: flex; align-items: center; width: 134px; height: 15px; margin: 0 7px 0 6px; padding-left: 4px; gap: 3px; background: #fff; border: 1px solid #c4c4c4; color: #888; }
.search svg { width: 9px; height: 9px; }
.search input { flex: 1; min-width: 0; outline: 0; }
.search input::placeholder { color: #aaa; opacity: 1; }
.winbtns { display: flex; gap: 7px; color: #333; }
.winbtns button { width: 14px; }

/* document tabs */
.tabbar { display: flex; flex: none; height: 17px; background: #b2b2b2; border-top: 1px solid #999; border-bottom: 3px solid #696969; }
.addtab { width: 13px; background: #a6a6a6; }
.doctab { display: flex; align-items: center; gap: 3px; width: 113px; padding: 0 4px; background: #696969; color: #fff; margin-bottom: -1px; }
.doctab svg { width: 11px; height: 11px; }
.doctab button svg { width: 8px; height: 8px; }
.doctab span { flex: 1; white-space: nowrap; }

/* ribbon */
.ribbon { display: flex; flex: none; height: 62px; background: #f2f2f2; border-bottom: 1px solid #8c8c8c; overflow: hidden; }
.group { display: flex; flex-direction: column; flex: none; border-right: 1px solid #c4c4c4; }
.rest { flex: 1; border: 0; }
.cells { display: grid; flex: 1; grid-template-rows: repeat(3, 17px); align-content: start; }
.sets .cells { grid-template-columns: 80px; }
.c2 { grid-template-columns: repeat(2, 17px); padding-right: 1px; }
.c3 { grid-template-columns: repeat(3, 17px); }
.c4 { grid-template-columns: repeat(4, 17px); padding-right: 1px; }
.w1 { grid-template-columns: 80px; }
.w2 { grid-template-columns: repeat(2, 80px); }
.w3 { grid-template-columns: repeat(3, 80px); }
.cells button { position: relative; }
.cells button:disabled { color: #c4c4c4; }
.cells .cmd { justify-content: flex-start; padding-left: 3px; gap: 3px; text-align: left; line-height: 8px; white-space: nowrap; }
.cmd.on { background: #4a4a4a; color: #fff; }
.more::after { content: ""; position: absolute; left: 13px; bottom: 2px; border-left: 4px solid transparent; border-bottom: 4px solid #222; }
.letter { font: bold 14px/14px "Noto Sans", sans-serif; }
.foot { position: relative; display: flex; align-items: center; justify-content: center; height: 11px; width: 0; min-width: 100%; background: #e1e1e1; font-size: 7px; white-space: nowrap; }
.sets .foot svg { width: 7px; height: 7px; }
.grip { padding-right: 6px; }
.drop { padding-right: 16px; }
.grip::after { content: ""; position: absolute; right: 2px; width: 3px; height: 5px; border: dotted #888; border-width: 0 1px; }
.drop::before { content: ""; position: absolute; right: 10px; }
.drop::before, .caretdn, .sel::after { border: 3px solid transparent; border-top: 4px solid #222; border-bottom: 0; }

/* work area */
.work { display: flex; flex: 1; min-height: 0; }
.panel { position: relative; z-index: 1; display: flex; flex-direction: column; width: 201px; flex: none; background: #f0f0f0; border-right: 1px solid #999; }
.ptabs { display: flex; height: 11px; flex: none; }
.ptabs button { justify-content: flex-start; padding-left: 3px; flex: 1; background: #c1c1c1; border: 1px solid #888; border-width: 0 0 1px 1px; line-height: 9px; }
.ptabs .cur { flex: 0 0 93px; padding-left: 2px; background: none; border: 0; }
.ptabs .pgear { flex: 0 0 13px; padding: 0; justify-content: center; color: #222; }
.pgear svg { width: 9px; height: 9px; }
.phead { display: grid; grid-template-columns: 1fr 17px 17px; grid-template-rows: 18px 20px; align-items: center; justify-items: center; flex: none; padding-right: 3px; border-bottom: 2px solid #999; font-size: 7px; color: #333; }
.phead span { justify-self: start; padding-left: 2px; }
.phead .help { width: 11px; height: 11px; border-radius: 50%; background: #222; color: #fff; font: bold 9px/11px "Open Sans", sans-serif; }
.phead .ok { grid-column: 2; }
.ok { color: #2f9e6b; }
.no { color: #d9534f; }

.form { flex: 1; padding-top: 2px; }
.form h2 { position: relative; margin: 0; padding: 8px 0 0 64px; font: 500 8px/12px "Roboto", sans-serif; color: #333; }
.fold::before { content: ""; position: absolute; left: 56px; bottom: 2px; width: 5px; height: 5px; border: solid #444; border-width: 1px 0 0 1px; transform: rotate(45deg); }
.form .band { margin-top: 10px; padding-top: 0; line-height: 14px; background: #cbcbcb; }
.row { display: grid; grid-template-columns: 62px minmax(0, 1fr); gap: 2px; align-items: center; height: 19px; padding-right: 20px; }
.pair { grid-template-columns: 62px 39px minmax(0, 1fr) 38px; }
.lang { grid-template-columns: 62px minmax(0, 1fr) 18px; padding-right: 0; }
.row label, .lbl { justify-self: end; text-align: right; line-height: 8px; color: #666; white-space: nowrap; }
.lbl i { font-style: normal; color: #888; }
.row input, .sel { display: flex; align-items: center; width: 100%; height: 16px; background: #fff; border: 1px solid #b4b4b4; min-width: 0; }
.row input { padding: 0 3px; }
.row input:disabled { background: #e4e4e4; color: #777; }
.sel { position: relative; }
.sel select { appearance: none; width: 100%; height: 14px; padding: 0 3px; outline: 0; }
.sel::after { content: ""; position: absolute; right: 4px; top: 5px; pointer-events: none; }
.face select { padding: 0 2px; }
.face small { position: absolute; left: 50px; font: 6px/10px "Roboto", sans-serif; color: #666; pointer-events: none; }
.sel.black { background: #000; }
.sel.black::after { border-top-color: #fff; }
.row a { color: #2a7fc0; white-space: nowrap; align-self: start; padding-top: 2px; }
.marks { display: flex; gap: 1px; color: #333; }
.marks button { width: 16px; height: 16px; }
.marks .on { background: #4a4a4a; color: #fff; }
.it, .bo, .un { font: bold 12px/14px "Open Sans", sans-serif; }
.it { font-style: italic; }
.un { font-weight: 600; text-decoration: underline; }
.marks.align { color: #c2c2c2; }
.marks.align .on { color: #aaa; }
.lang button { color: #111; }
.hint { display: flex; align-items: center; gap: 3px; flex: none; height: 15px; padding: 0 3px; border-top: 1px solid #999; color: #333; }
.hint svg { width: 8px; height: 8px; }
.hint span { flex: 1; white-space: nowrap; }

/* drawing */
.canvas { position: relative; flex: 1; min-width: 0; background: #fff; overflow: hidden; margin-left: -1px; }
.sheet { width: 100%; height: 100%; }
.thin { stroke: #555; }
.pale { stroke: #bdbdbd; stroke-width: 2; }
.steel { stroke: #4f94bd; stroke-width: 2; }
.blue { stroke: #1976c8; stroke-width: 1.500; }
.dotb { stroke: #8cbfe4; stroke-width: 1.500; stroke-dasharray: 2 2; }
.dot { stroke: #555; stroke-dasharray: 2 2; }
.gost, .axis { fill: #222; stroke: none; font: italic 300 14px "Roboto", sans-serif; }
.gost .small { font-size: 13px; }
.gost .big { font-size: 20px; }
.axis { font: 8px "Open Sans", sans-serif; }
.caret { stroke: #222; stroke-width: 1.500; }

/* floating toolbar */
.quick { position: absolute; top: 0; left: 317px; display: flex; align-items: center; height: 17px; background: #f0f0f0; border: 1px solid #aaa; border-top: 0; color: #333; }
.quick button { width: 18px; height: 16px; gap: 4px; }
.quick .wide { width: 31px; }
.quick .dark { background: #4a4a4a; color: #fff; }
.quick .dark:not(.wide) { width: 16px; }
.quick .dark .caretdn { border-top-color: #fff; }
.quick .edge { width: 19px; border-right: 1px solid #888; }
.quick button:disabled { color: #ccc; }
.handle { width: 7px; height: 4px; margin: 0 2px 7px; background: repeating-linear-gradient(90deg, #888 0 1px, transparent 1px 2px); }
.val { display: flex; align-items: center; gap: 2px; height: 16px; padding: 0 4px 0 2px; background: #fff; }
.val .caretdn { margin-left: auto; }
.cs { width: 54px; }
.stp { width: 46px; }
.zm { width: 46px; }
.quick label { width: 15px; text-align: center; }
.quick input { width: 26px; height: 16px; background: #fff; }

/* context menus */
.menu { position: absolute; display: flex; flex-direction: column; background: #fff; border: 1px solid #888; }
.menu button { position: relative; flex: none; justify-content: flex-start; height: 16px; padding-left: 19px; white-space: nowrap; }
.menu p { margin: 0; padding: 3px 7px 3px 19px; color: #b8b8b8; line-height: 11px; white-space: nowrap; }
.menu hr { width: auto; margin: 0 2px 2px 14px; border: 0; border-top: 1px solid #ddd; }
.menu .hot { background: #e3e3e3; }
.sub::after { content: ""; position: absolute; right: 9px; border: 3px solid transparent; border-left: 5px solid #222; border-right: 0; }
.main { left: 282px; top: 333px; width: 258px; }
.people { left: 539px; top: 353px; width: 91px; padding-bottom: 1px; border-color: #999; box-shadow: 2px 2px 1px #777; }
.people hr { margin-top: 1px; }

/* taskbar */
.taskbar { display: flex; justify-content: space-between; flex: none; height: 20px; background: #020407; color: #fff; }
.apps { display: flex; flex: 1; max-width: 469px; }
.apps button { flex: 1; }
.apps svg { width: 11px; height: 11px; }
.run { position: relative; }
.run::after { content: ""; position: absolute; left: 3px; right: 3px; bottom: 0; height: 1px; background: #76b9ed; }
.apps .act { background: #2f3a44; }
.act::after { left: 0; right: 0; }
.tray { display: flex; align-items: center; gap: 6px; padding-right: 16px; }
.tray svg { width: 10px; height: 10px; }
.tray time { margin: 0 8px 0 3px; }
.tray .note { width: 12px; height: 11px; }
```
